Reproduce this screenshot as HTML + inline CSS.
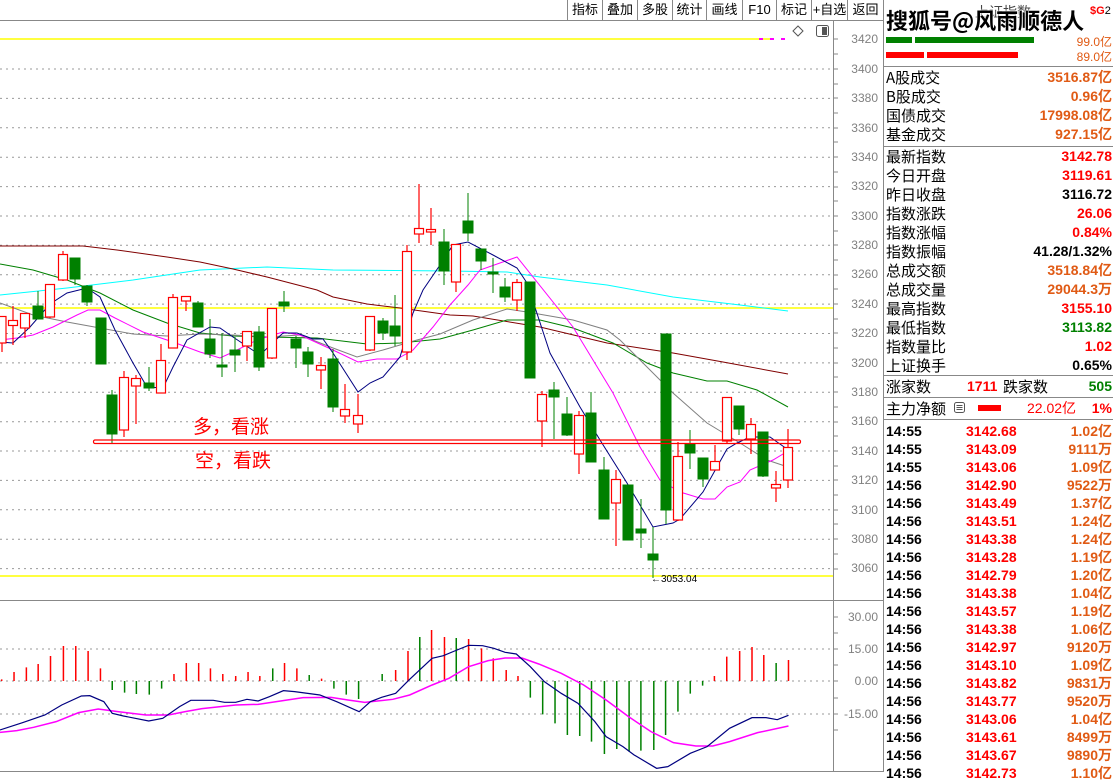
<!DOCTYPE html>
<html><head><meta charset="utf-8"><style>
body{margin:0;width:1113px;height:772px;overflow:hidden;background:#fff;position:relative;font-family:"Liberation Sans","Noto Sans CJK SC",sans-serif}
.a{position:absolute;white-space:nowrap}
.tb{position:absolute;top:0;height:20px;border-left:1px solid #888;font-size:13px;line-height:20px;text-align:center}
.lb{position:absolute;left:886px;font-family:"Noto Sans CJK SC",sans-serif;font-size:15px;line-height:19px;color:#000}
.v{position:absolute;right:1px;font-weight:bold;font-size:14px;line-height:19px;font-family:"Liberation Sans","Noto Sans CJK SC",sans-serif}
.r{color:#f00}.o{color:#e05a14}.k{color:#000}.g{color:#008000}
.ax{position:absolute;left:838px;width:40px;text-align:right;font-size:12px;color:#808080}
.tr{position:absolute;left:886px;width:227px;height:18px;font-weight:bold;font-size:14px;line-height:18px}
.tr span{position:absolute}
</style></head><body>
<svg width="1113" height="772" style="position:absolute;left:0;top:0">
<g stroke="#999" stroke-dasharray="2,4" stroke-width="1">
<path d="M0 69H833M0 98.4H833M0 127.8H833M0 157.2H833M0 186.6H833M0 216H833M0 245.3H833M0 274.7H833M0 304.1H833M0 333.5H833M0 362.9H833M0 392.3H833M0 421.7H833M0 451H833M0 480.4H833M0 509.8H833M0 539.2H833M0 568.6H833M0 649H833M0 681H833M0 714H833"/>
</g>
<path d="M0 20.5H883M833.5 20V772M0 600.5H883M883.5 0V772M0 771.5H883" stroke="#888" fill="none"/>
<path d="M833 39H838M833 54H838M833 69H838M833 84H838M833 98H838M833 113H838M833 128H838M833 142H838M833 157H838M833 172H838M833 187H838M833 201H838M833 216H838M833 231H838M833 245H838M833 260H838M833 275H838M833 289H838M833 304H838M833 319H838M833 333H838M833 348H838M833 363H838M833 377H838M833 392H838M833 407H838M833 422H838M833 436H838M833 451H838M833 466H838M833 480H838M833 495H838M833 510H838M833 524H838M833 539H838M833 554H838M833 569H838M833 617H838M833 633H838M833 649H838M833 665H838M833 681H838M833 698H838M833 714H838M833 730H838" stroke="#888"/>
<path d="M0 39H770M0 308H833M0 576H833" stroke="#ff0" stroke-width="1.5"/>
<path d="M759 39h4M770 39h4M781 39h4" stroke="#f0f" stroke-width="2"/>
<path d="M793 31l5-5 5 5-5 5z" fill="none" stroke="#555"/>
<rect x="816.5" y="25.5" width="12" height="11" rx="2" fill="none" stroke="#555"/><rect x="822" y="27" width="5" height="8" fill="#555"/>
<!-- MA lines -->
<g fill="none" stroke-width="1">
<polyline stroke="#00ffff" points="0,295 67,288 133,280 200,270 267,267 333,270 450,271 507,272 540,277 607,285 673,297 740,305 788,311"/>
<polyline stroke="#800000" points="0,246 83,246 117,250 167,257 200,262 233,269 267,277 317,290 333,297 367,304 400,308 450,315 473,316 540,327 607,343 673,353 723,362 788,374"/>
<polyline stroke="#008000" points="0,264 33,270 67,280 100,293 133,310 167,323 200,333 233,336 267,337 317,338 367,344 400,343 440,339 473,330 507,320 540,320 573,328 613,343 647,363 673,373 707,381 727,381 757,390 788,407"/>
<polyline stroke="#808080" points="0,303 33,315 67,322 100,328 133,334 167,336 200,334 233,335 267,337 300,335 333,348 357,357 383,350 417,340 440,334 473,320 507,309 527,312 573,320 607,330 620,340 647,367 673,393 707,423 740,443 767,460 788,467"/>
<polyline stroke="#ff00ff" points="0,340 17,338 33,335 53,327 77,315 88,310 100,310 115,318 143,332 173,342 200,352 220,358 233,352 257,340 283,332 300,335 333,350 358,362 377,359 397,359 413,350 433,327 450,305 468,285 480,270 517,257 573,327 613,393 640,447 660,480 680,492 703,499 715,499 727,487 740,482 750,470 773,460 788,451"/>
<polyline stroke="#000080" points="0,342 13,343 30,327 50,304 67,293 87,288 100,297 115,330 133,363 147,387 163,388 173,367 187,340 210,327 220,328 233,337 260,355 283,333 297,333 313,339 323,339 333,353 358,392 370,383 383,377 400,357 413,313 423,290 440,265 453,245 468,242 493,255 517,268 527,283 550,353 580,407 600,440 627,483 653,527 673,523 680,519 703,492 727,449 737,443 750,437 770,437 787,449"/>
</g>
<!-- green candles -->
<g stroke="#008000" fill="#008000">
<path d="M38 291V319M75 258V285M87 285V306M101 318V364M112 390V443M149 367V391M198 301V327M210 319V358M222 333V377M235 337V372M259 326V371M284 291V312M296 336V368M308 347V377M333 349V412M383 318V340M395 295V346M444 229V285M468 193V241M481 249V270M493 258V293M505 278V302M530 282V378M554 382V439M567 397V436M591 392V462M604 457V519M628 485V540M641 499V548M653 527V578M666 334V524M690 430V469M703 458V487M739 406V435M763 432V477" fill="none"/>
<rect x="33" y="306" width="10" height="13"/><rect x="70" y="258" width="10" height="21"/><rect x="82" y="286" width="10" height="16"/><rect x="96" y="318" width="10" height="46"/><rect x="107" y="395" width="10" height="39"/><rect x="144" y="383" width="10" height="5"/><rect x="193" y="303" width="10" height="24"/><rect x="205" y="339" width="10" height="15"/><rect x="217" y="365" width="10" height="2"/><rect x="230" y="350" width="10" height="5"/><rect x="254" y="332" width="10" height="35"/><rect x="279" y="302" width="10" height="4"/><rect x="291" y="339" width="10" height="9"/><rect x="303" y="352" width="10" height="12"/><rect x="328" y="359" width="10" height="48"/><rect x="378" y="321" width="10" height="12"/><rect x="390" y="326" width="10" height="10"/><rect x="439" y="242" width="10" height="29"/><rect x="463" y="221" width="10" height="12"/><rect x="476" y="249" width="10" height="12"/><rect x="488" y="272" width="10" height="2"/><rect x="500" y="287" width="10" height="10"/><rect x="525" y="282" width="10" height="96"/><rect x="549" y="390" width="10" height="7"/><rect x="562" y="414" width="10" height="21"/><rect x="586" y="413" width="10" height="49"/><rect x="599" y="470" width="10" height="49"/><rect x="623" y="485" width="10" height="55"/><rect x="636" y="529" width="10" height="4"/><rect x="648" y="554" width="10" height="6"/><rect x="661" y="334" width="10" height="176"/><rect x="685" y="444" width="10" height="9"/><rect x="698" y="458" width="10" height="21"/><rect x="734" y="406" width="10" height="23"/><rect x="758" y="432" width="10" height="44"/>
</g>
<!-- red candles -->
<g stroke="#f00" fill="#fff" stroke-width="1.2">
<path d="M2 343V352M13 306V320M13 325V345M25 328V338M50 317V318M63 251V254M63 280V281M124 371V377M124 430V437M136 375V378M136 386V424M161 344V360M173 294V297M186 301V311M247 346V361M272 358V359M321 357V365M321 370V389M345 384V409M345 416V423M358 394V415M358 424V433M370 350V351M407 245V251M407 352V360M419 184V228M419 234V243M431 208V229M431 232V245M456 282V292M517 279V282M517 300V311M542 391V394M542 421V447M579 411V415M579 454V474M616 470V479M616 503V546M678 442V456M678 520V521M715 445V461M727 441V444M751 418V424M751 439V454M776 471V484M776 488V502M788 429V447M788 480V488" fill="none"/>
<rect x="-3" y="316.5" width="9" height="26.5"/><rect x="8.5" y="320.5" width="9" height="5"/><rect x="20.5" y="313.5" width="9" height="14.5"/><rect x="45.5" y="284.5" width="9" height="32.5"/><rect x="58.5" y="254.5" width="9" height="25.5"/><rect x="119.5" y="377.5" width="9" height="52.5"/><rect x="131.5" y="378.5" width="9" height="7.5"/><rect x="156.5" y="360.5" width="9" height="32.5"/><rect x="168.5" y="297.5" width="9" height="50.5"/><rect x="181.5" y="296.5" width="9" height="4.5"/><rect x="242.5" y="331.5" width="9" height="14.5"/><rect x="267.5" y="308.5" width="9" height="49.5"/><rect x="316.5" y="365.5" width="9" height="4.5"/><rect x="340.5" y="409.5" width="9" height="6.5"/><rect x="353.5" y="415.5" width="9" height="8.5"/><rect x="365.5" y="316.5" width="9" height="33.5"/><rect x="402.5" y="251.5" width="9" height="100.5"/><rect x="414.5" y="228.5" width="9" height="5.5"/><rect x="426.5" y="229.5" width="9" height="2.5"/><rect x="451.5" y="244.5" width="9" height="37.5"/><rect x="512.5" y="282.5" width="9" height="17.5"/><rect x="537.5" y="394.5" width="9" height="26.5"/><rect x="574.5" y="415.5" width="9" height="38.5"/><rect x="611.5" y="479.5" width="9" height="23.5"/><rect x="673.5" y="456.5" width="9" height="63.5"/><rect x="710.5" y="461.5" width="9" height="8.5"/><rect x="722.5" y="397.5" width="9" height="43.5"/><rect x="746.5" y="424.5" width="9" height="14.5"/><rect x="771.5" y="484.5" width="9" height="3.5"/><rect x="783.5" y="447.5" width="9" height="32.5"/>
</g>
<rect x="93.5" y="440" width="707" height="3.5" rx="1.5" fill="none" stroke="#f00" stroke-width="1.2"/>
<text x="193" y="433" fill="#f00" font-size="19" font-family="Noto Sans CJK SC,sans-serif">多，看涨</text>
<text x="195" y="467" fill="#f00" font-size="19" font-family="Noto Sans CJK SC,sans-serif">空，看跌</text>
<text x="651" y="582" fill="#000" font-size="10" font-family="Liberation Sans,sans-serif">←3053.04</text>
<!-- MACD -->
<g transform="translate(0,590) scale(0.5612,0.3333)">
<g stroke="#f00" stroke-width="1.5" vector-effect="non-scaling-stroke">
<path vector-effect="non-scaling-stroke" d="M3 273V268M25 273V246M47 273V232M68 273V222M90 273V198M113 273V168M135 273V168M157 273V183M179 273V235M310 273V252M332 273V219M354 273V219M375 273V235M397 273V252M420 273V258M442 273V246M463 273V258M507 273V219M529 273V235M573 273V266M705 273V240M727 273V183M769 273V120M792 273V141M835 273V147M858 273V175M879 273V205M902 273V240M923 273V258M1273 273V258M1295 273V200M1318 273V183M1340 273V171M1361 273V195M1405 273V210"/>
</g>
<path vector-effect="non-scaling-stroke" stroke="#008000" stroke-width="1.5" d="M200 273V300M222 273V308M243 273V312M266 273V314M288 273V296M486 273V235M551 273V255M595 273V296M617 273V314M639 273V327M681 273V252M748 273V141M813 273V144M945 273V323M967 273V373M989 273V400M1011 273V435M1033 273V438M1054 273V455M1077 273V492M1099 273V477M1121 273V485M1142 273V482M1165 273V480M1186 273V435M1208 273V365M1230 273V311M1252 273V287M1383 273V219"/>
<polyline vector-effect="non-scaling-stroke" fill="none" stroke="#ff00ff" stroke-width="1.5" points="0,427 30,422 60,412 100,395 140,368 175,357 210,365 260,375 300,375 330,365 360,356 420,345 460,343 500,333 540,323 590,322 620,330 650,337 700,328 730,315 770,285 800,265 835,230 870,212 900,204 930,204 960,222 1000,250 1040,285 1080,330 1120,380 1160,425 1200,458 1240,468 1270,468 1300,455 1350,428 1405,408"/>
<polyline vector-effect="non-scaling-stroke" fill="none" stroke="#000080" stroke-width="1.2" points="0,420 40,398 80,375 110,345 145,318 160,317 185,335 200,370 220,378 265,393 290,385 320,350 340,331 380,331 400,337 420,337 440,328 460,333 480,320 505,302 525,305 570,315 600,335 640,365 660,335 680,322 705,310 730,268 770,205 790,197 810,183 835,166 860,167 880,175 900,187 920,192 945,230 970,275 1000,310 1030,340 1060,395 1080,440 1110,470 1130,495 1170,535 1190,530 1230,490 1260,470 1300,415 1340,383 1365,383 1385,389 1405,376"/>
</g>
<rect x="886" y="37" width="26" height="6" fill="#008000"/><rect x="915" y="37" width="119" height="6" fill="#008000"/>
<rect x="886" y="52" width="38" height="6" fill="#f00"/><rect x="927" y="52" width="91" height="6" fill="#f00"/>
<path d="M883 66.5H1113M883 146.5H1113M883 375.5H1113M883 397.5H1113M883 419.5H1113" stroke="#888"/>
<rect x="978" y="405" width="23" height="6" fill="#f00"/>
<rect x="954.5" y="402.5" width="10" height="10" rx="2" fill="none" stroke="#555"/><path d="M956.5 405.5h6M956.5 407.5h6M956.5 409.5h6" stroke="#555"/>
</svg>
<!-- toolbar -->
<div class="tb" style="left:567px;width:34px">指标</div><div class="tb" style="left:602px;width:34px">叠加</div><div class="tb" style="left:637px;width:34px">多股</div><div class="tb" style="left:672px;width:33px">统计</div><div class="tb" style="left:706px;width:35px">画线</div><div class="tb" style="left:742px;width:33px">F10</div><div class="tb" style="left:776px;width:34px">标记</div><div class="tb" style="left:811px;width:35px">+自选</div><div class="tb" style="left:847px;width:35px">返回</div>
<!-- axis labels -->
<div class="ax" style="top:32px">3420</div><div class="ax" style="top:62px">3400</div><div class="ax" style="top:91px">3380</div><div class="ax" style="top:121px">3360</div><div class="ax" style="top:150px">3340</div><div class="ax" style="top:179px">3320</div><div class="ax" style="top:209px">3300</div><div class="ax" style="top:238px">3280</div><div class="ax" style="top:267px">3260</div><div class="ax" style="top:297px">3240</div><div class="ax" style="top:326px">3220</div><div class="ax" style="top:356px">3200</div><div class="ax" style="top:385px">3180</div><div class="ax" style="top:414px">3160</div><div class="ax" style="top:444px">3140</div><div class="ax" style="top:473px">3120</div><div class="ax" style="top:503px">3100</div><div class="ax" style="top:532px">3080</div><div class="ax" style="top:561px">3060</div>
<div class="ax" style="top:610px">30.00</div><div class="ax" style="top:642px">15.00</div><div class="ax" style="top:674px">0.00</div><div class="ax" style="top:707px">-15.00</div>
<!-- right panel header -->
<div class="a" style="left:975px;top:2px;font-size:14px;color:#444;font-family:'Noto Sans CJK SC',sans-serif">上证指数</div>
<div class="a" style="left:886px;top:4px;font-size:22px;font-weight:bold;color:#000;font-family:'Noto Sans CJK SC',sans-serif;text-shadow:0 0 2px #fff,0 0 2px #fff">搜狐号@风雨顺德人</div>
<div class="a" style="left:1090px;top:5px;font-size:11px;color:#f00;font-weight:bold">$G<span style="color:#000;font-weight:normal">2</span></div>
<div class="a o" style="right:1px;top:33px;font-size:12px">99.0亿</div>
<div class="a o" style="right:1px;top:48px;font-size:12px">89.0亿</div>
<div class="lb" style="top:68px">A股成交</div><div class="v o" style="top:68px">3516.87亿</div>
<div class="lb" style="top:87px">B股成交</div><div class="v o" style="top:87px">0.96亿</div>
<div class="lb" style="top:106px">国债成交</div><div class="v o" style="top:106px">17998.08亿</div>
<div class="lb" style="top:125px">基金成交</div><div class="v o" style="top:125px">927.15亿</div>
<div class="lb" style="top:147px">最新指数</div><div class="v r" style="top:147px">3142.78</div>
<div class="lb" style="top:166px">今日开盘</div><div class="v r" style="top:166px">3119.61</div>
<div class="lb" style="top:185px">昨日收盘</div><div class="v k" style="top:185px">3116.72</div>
<div class="lb" style="top:204px">指数涨跌</div><div class="v r" style="top:204px">26.06</div>
<div class="lb" style="top:223px">指数涨幅</div><div class="v r" style="top:223px">0.84%</div>
<div class="lb" style="top:242px">指数振幅</div><div class="v k" style="top:242px">41.28/1.32%</div>
<div class="lb" style="top:261px">总成交额</div><div class="v o" style="top:261px">3518.84亿</div>
<div class="lb" style="top:280px">总成交量</div><div class="v o" style="top:280px">29044.3万</div>
<div class="lb" style="top:299px">最高指数</div><div class="v r" style="top:299px">3155.10</div>
<div class="lb" style="top:318px">最低指数</div><div class="v g" style="top:318px">3113.82</div>
<div class="lb" style="top:337px">指数量比</div><div class="v r" style="top:337px">1.02</div>
<div class="lb" style="top:356px">上证换手</div><div class="v k" style="top:356px">0.65%</div>
<div class="lb" style="top:377px">涨家数</div><div class="v r" style="top:377px;left:967px;right:auto">1711</div><div class="lb" style="top:377px;left:1003px">跌家数</div><div class="v g" style="top:377px">505</div>
<div class="lb" style="top:399px">主力净额</div><div class="v r" style="top:399px;left:1027px;right:auto;font-weight:normal">22.02亿</div><div class="v r" style="top:399px">1%</div>
<div style="position:absolute;left:0;top:0">
<div class="tr" style="top:422px"><span>14:55</span><span class="r" style="left:80px">3142.68</span><span class="o" style="right:1px">1.02亿</span></div>
<div class="tr" style="top:440px"><span>14:55</span><span class="r" style="left:80px">3143.09</span><span class="o" style="right:1px">9111万</span></div>
<div class="tr" style="top:458px"><span>14:55</span><span class="r" style="left:80px">3143.06</span><span class="o" style="right:1px">1.09亿</span></div>
<div class="tr" style="top:476px"><span>14:56</span><span class="r" style="left:80px">3142.90</span><span class="o" style="right:1px">9522万</span></div>
<div class="tr" style="top:494px"><span>14:56</span><span class="r" style="left:80px">3143.49</span><span class="o" style="right:1px">1.37亿</span></div>
<div class="tr" style="top:512px"><span>14:56</span><span class="r" style="left:80px">3143.51</span><span class="o" style="right:1px">1.24亿</span></div>
<div class="tr" style="top:530px"><span>14:56</span><span class="r" style="left:80px">3143.38</span><span class="o" style="right:1px">1.24亿</span></div>
<div class="tr" style="top:548px"><span>14:56</span><span class="r" style="left:80px">3143.28</span><span class="o" style="right:1px">1.19亿</span></div>
<div class="tr" style="top:566px"><span>14:56</span><span class="r" style="left:80px">3142.79</span><span class="o" style="right:1px">1.20亿</span></div>
<div class="tr" style="top:584px"><span>14:56</span><span class="r" style="left:80px">3143.38</span><span class="o" style="right:1px">1.04亿</span></div>
<div class="tr" style="top:602px"><span>14:56</span><span class="r" style="left:80px">3143.57</span><span class="o" style="right:1px">1.19亿</span></div>
<div class="tr" style="top:620px"><span>14:56</span><span class="r" style="left:80px">3143.38</span><span class="o" style="right:1px">1.06亿</span></div>
<div class="tr" style="top:638px"><span>14:56</span><span class="r" style="left:80px">3142.97</span><span class="o" style="right:1px">9120万</span></div>
<div class="tr" style="top:656px"><span>14:56</span><span class="r" style="left:80px">3143.10</span><span class="o" style="right:1px">1.09亿</span></div>
<div class="tr" style="top:674px"><span>14:56</span><span class="r" style="left:80px">3143.82</span><span class="o" style="right:1px">9831万</span></div>
<div class="tr" style="top:692px"><span>14:56</span><span class="r" style="left:80px">3143.77</span><span class="o" style="right:1px">9520万</span></div>
<div class="tr" style="top:710px"><span>14:56</span><span class="r" style="left:80px">3143.06</span><span class="o" style="right:1px">1.04亿</span></div>
<div class="tr" style="top:728px"><span>14:56</span><span class="r" style="left:80px">3143.61</span><span class="o" style="right:1px">8499万</span></div>
<div class="tr" style="top:746px"><span>14:56</span><span class="r" style="left:80px">3143.67</span><span class="o" style="right:1px">9890万</span></div>
<div class="tr" style="top:764px"><span>14:56</span><span class="r" style="left:80px">3142.73</span><span class="o" style="right:1px">1.10亿</span></div>
</div>
</body></html>
